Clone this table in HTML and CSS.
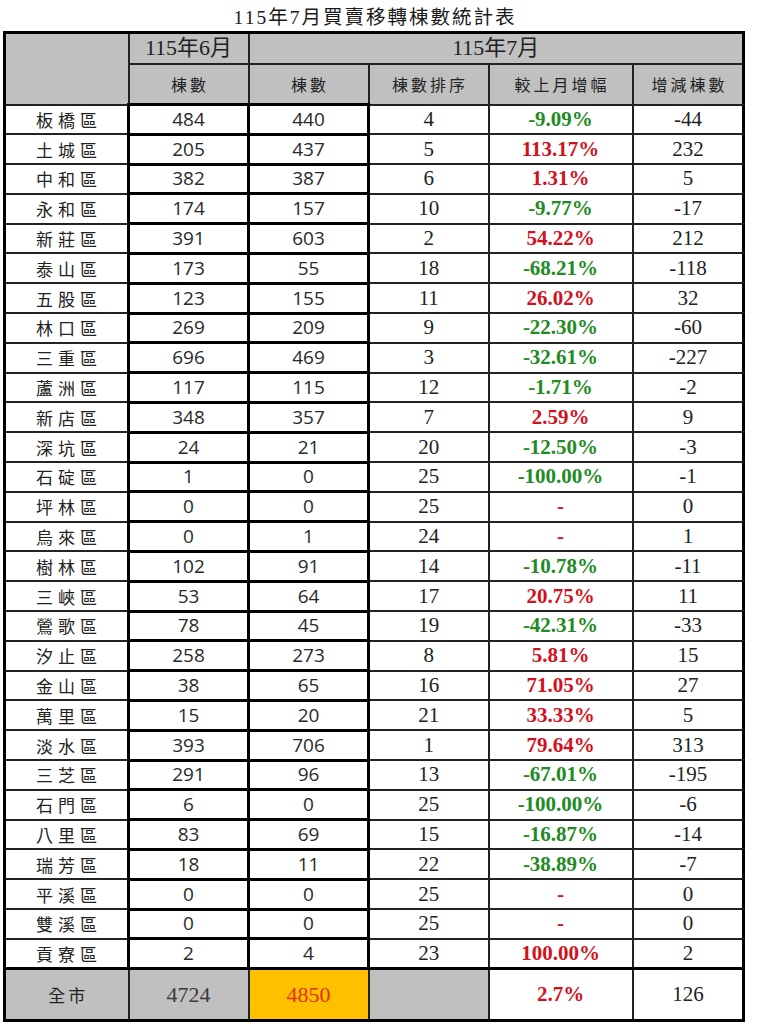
FILE: index.html
```html
<!DOCTYPE html>
<html lang="zh-Hant">
<head>
<meta charset="utf-8">
<title>115年7月買賣移轉棟數統計表</title>
<link rel="stylesheet" href="styles.css">
</head>
<body>
<div class="page">
  <h1 class="title">115年7月買賣移轉棟數統計表</h1>
  <table class="stats">
    <colgroup>
      <col class="c-name"><col class="c-n"><col class="c-n"><col class="c-rank"><col class="c-pct"><col class="c-diff">
    </colgroup>
    <thead>
      <tr class="h1">
        <th rowspan="2" class="blank"></th>
        <th class="month">115年6月</th>
        <th colspan="5" class="month">115年7月</th>
      </tr>
      <tr class="h2">
        <th class="lbl">棟數</th>
        <th class="lbl">棟數</th>
        <th class="lbl">棟數排序</th>
        <th class="lbl">較上月增幅</th>
        <th class="lbl">增減棟數</th>
      </tr>
    </thead>
    <tbody>
      <tr><td class="name">板橋區</td><td class="n">484</td><td class="n">440</td><td class="s">4</td><td class="p g">-9.09%</td><td class="s">-44</td></tr>
      <tr><td class="name">土城區</td><td class="n">205</td><td class="n">437</td><td class="s">5</td><td class="p r">113.17%</td><td class="s">232</td></tr>
      <tr><td class="name">中和區</td><td class="n">382</td><td class="n">387</td><td class="s">6</td><td class="p r">1.31%</td><td class="s">5</td></tr>
      <tr><td class="name">永和區</td><td class="n">174</td><td class="n">157</td><td class="s">10</td><td class="p g">-9.77%</td><td class="s">-17</td></tr>
      <tr><td class="name">新莊區</td><td class="n">391</td><td class="n">603</td><td class="s">2</td><td class="p r">54.22%</td><td class="s">212</td></tr>
      <tr><td class="name">泰山區</td><td class="n">173</td><td class="n">55</td><td class="s">18</td><td class="p g">-68.21%</td><td class="s">-118</td></tr>
      <tr><td class="name">五股區</td><td class="n">123</td><td class="n">155</td><td class="s">11</td><td class="p r">26.02%</td><td class="s">32</td></tr>
      <tr><td class="name">林口區</td><td class="n">269</td><td class="n">209</td><td class="s">9</td><td class="p g">-22.30%</td><td class="s">-60</td></tr>
      <tr><td class="name">三重區</td><td class="n">696</td><td class="n">469</td><td class="s">3</td><td class="p g">-32.61%</td><td class="s">-227</td></tr>
      <tr><td class="name">蘆洲區</td><td class="n">117</td><td class="n">115</td><td class="s">12</td><td class="p g">-1.71%</td><td class="s">-2</td></tr>
      <tr><td class="name">新店區</td><td class="n">348</td><td class="n">357</td><td class="s">7</td><td class="p r">2.59%</td><td class="s">9</td></tr>
      <tr><td class="name">深坑區</td><td class="n">24</td><td class="n">21</td><td class="s">20</td><td class="p g">-12.50%</td><td class="s">-3</td></tr>
      <tr><td class="name">石碇區</td><td class="n">1</td><td class="n">0</td><td class="s">25</td><td class="p g">-100.00%</td><td class="s">-1</td></tr>
      <tr><td class="name">坪林區</td><td class="n">0</td><td class="n">0</td><td class="s">25</td><td class="p r">-</td><td class="s">0</td></tr>
      <tr><td class="name">烏來區</td><td class="n">0</td><td class="n">1</td><td class="s">24</td><td class="p r">-</td><td class="s">1</td></tr>
      <tr><td class="name">樹林區</td><td class="n">102</td><td class="n">91</td><td class="s">14</td><td class="p g">-10.78%</td><td class="s">-11</td></tr>
      <tr><td class="name">三峽區</td><td class="n">53</td><td class="n">64</td><td class="s">17</td><td class="p r">20.75%</td><td class="s">11</td></tr>
      <tr><td class="name">鶯歌區</td><td class="n">78</td><td class="n">45</td><td class="s">19</td><td class="p g">-42.31%</td><td class="s">-33</td></tr>
      <tr><td class="name">汐止區</td><td class="n">258</td><td class="n">273</td><td class="s">8</td><td class="p r">5.81%</td><td class="s">15</td></tr>
      <tr><td class="name">金山區</td><td class="n">38</td><td class="n">65</td><td class="s">16</td><td class="p r">71.05%</td><td class="s">27</td></tr>
      <tr><td class="name">萬里區</td><td class="n">15</td><td class="n">20</td><td class="s">21</td><td class="p r">33.33%</td><td class="s">5</td></tr>
      <tr><td class="name">淡水區</td><td class="n">393</td><td class="n">706</td><td class="s">1</td><td class="p r">79.64%</td><td class="s">313</td></tr>
      <tr><td class="name">三芝區</td><td class="n">291</td><td class="n">96</td><td class="s">13</td><td class="p g">-67.01%</td><td class="s">-195</td></tr>
      <tr><td class="name">石門區</td><td class="n">6</td><td class="n">0</td><td class="s">25</td><td class="p g">-100.00%</td><td class="s">-6</td></tr>
      <tr><td class="name">八里區</td><td class="n">83</td><td class="n">69</td><td class="s">15</td><td class="p g">-16.87%</td><td class="s">-14</td></tr>
      <tr><td class="name">瑞芳區</td><td class="n">18</td><td class="n">11</td><td class="s">22</td><td class="p g">-38.89%</td><td class="s">-7</td></tr>
      <tr><td class="name">平溪區</td><td class="n">0</td><td class="n">0</td><td class="s">25</td><td class="p r">-</td><td class="s">0</td></tr>
      <tr><td class="name">雙溪區</td><td class="n">0</td><td class="n">0</td><td class="s">25</td><td class="p r">-</td><td class="s">0</td></tr>
      <tr><td class="name">貢寮區</td><td class="n">2</td><td class="n">4</td><td class="s">23</td><td class="p r">100.00%</td><td class="s">2</td></tr>
    </tbody>
    <tfoot>
      <tr class="total">
        <td class="tname">全市</td>
        <td class="tgray">4724</td>
        <td class="thi">4850</td>
        <td class="tgray"></td>
        <td class="p r">2.7%</td>
        <td class="s">126</td>
      </tr>
    </tfoot>
  </table>
</div>
</body>
</html>
```
FILE: styles.css
```css
html, body {
  margin: 0;
  padding: 0;
  background: #ffffff;
}

.page {
  width: 773px;
  padding-left: 3px;
  box-sizing: border-box;
}

.title {
  margin: 0;
  width: 744px;
  height: 31px;
  padding-top: 6px;
  box-sizing: border-box;
  text-align: center;
  font-family: "Liberation Serif", "Noto Sans CJK TC", serif;
  font-weight: 400;
  font-size: 19.5px;
  line-height: 24px;
  letter-spacing: 2px;
  color: #1a1a1a;
}

.stats {
  border-collapse: collapse;
  table-layout: fixed;
  width: 739px;
  border: 3px solid #000;
}

.c-name { width: 124px; }
.c-n { width: 120px; }
.c-rank { width: 120px; }
.c-pct { width: 144px; }
.c-diff { width: 111px; }

.stats th,
.stats td {
  padding: 0;
  text-align: center;
  vertical-align: middle;
  border: 2px solid #222;
  color: #222;
  white-space: nowrap;
}

.stats th {
  background: #c0c0c0;
  font-weight: 400;
}

.h1 { height: 31px; }
.h2 { height: 41px; }

.month {
  font-family: "Liberation Serif", "Noto Sans CJK TC", serif;
  font-size: 22px;
  line-height: 1;
  color: #1a1a1a;
}

.lbl {
  font-family: "Noto Sans CJK TC", sans-serif;
  font-size: 16px;
  line-height: 1;
  letter-spacing: 3px;
  text-indent: 3px;
  color: #333;
}

.stats tbody tr { height: 29.8px; }

.name {
  font-family: "Noto Sans CJK TC", sans-serif;
  font-size: 17px;
  letter-spacing: 5px;
  text-indent: 5px;
  color: #333;
  line-height: 1;
}

.stats td.n {
  border: 3px solid #000;
  font-family: "Open Sans", "Noto Sans", sans-serif;
  font-size: 19px;
  line-height: 1;
  color: #2a2a2a;
}

.s {
  font-family: "Liberation Serif", serif;
  font-size: 21px;
  line-height: 1;
  color: #1a1a1a;
}

.p {
  font-family: "Liberation Serif", serif;
  font-weight: 700;
  font-size: 21px;
  line-height: 1;
}

.stats td.g { color: #228b22; }
.stats td.r { color: #d4101c; }

.total { height: 52px; }

.stats .total td {
  border-top: 3px solid #000;
}

.tname {
  background: #c0c0c0;
  font-family: "Noto Sans CJK TC", sans-serif;
  font-size: 17px;
  letter-spacing: 3px;
  text-indent: 3px;
  color: #333;
}

.stats td.tgray {
  background: #c0c0c0;
  font-family: "Liberation Serif", serif;
  font-size: 22px;
  color: #3a3a3a;
}

.stats td.thi {
  background: #ffc000;
  font-family: "Liberation Serif", serif;
  font-size: 22px;
  color: #e0321c;
}
```
